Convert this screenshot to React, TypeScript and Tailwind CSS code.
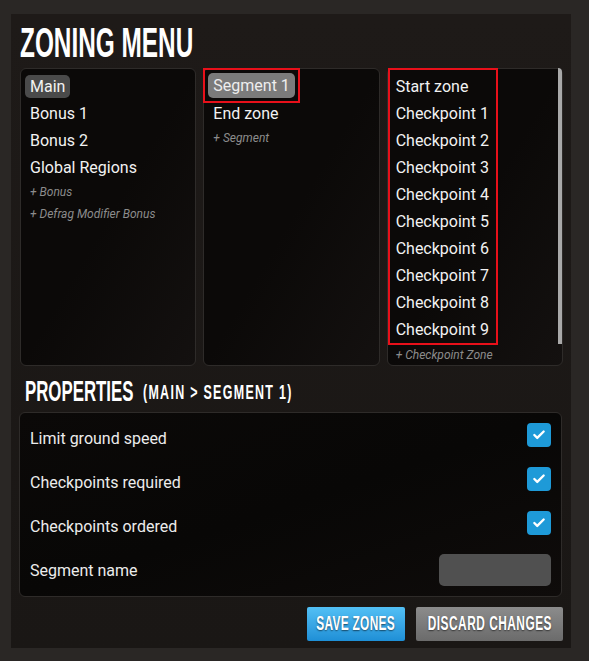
import React from "react";
import { Check } from "lucide-react";

const HEAD = { fontFamily: '"Liberation Sans", Arial, sans-serif' };
const BODY = { fontFamily: 'Roboto, "Liberation Sans", sans-serif' };

function Row({ children, selected }: { children: React.ReactNode; selected?: boolean }) {
  return (
    <div className="h-[27px] flex items-center">
      <span
        className={
          "px-[5px] h-[23px] flex items-center rounded-[5px] text-[16px] text-[#f2f2f2] " +
          (selected ? "bg-[#4a4a4a]" : "")
        }
      >
        {children}
      </span>
    </div>
  );
}

function Add({ children, h = "h-[22px]", pl = "pl-[5px]" }: { children: React.ReactNode; h?: string; pl?: string }) {
  return <div className={`${h} ${pl} flex items-center text-[12px] italic text-[#8c8c8c]`}>{children}</div>;
}

function Box({ children, extra = "" }: { children: React.ReactNode; extra?: string }) {
  return (
    <div
      className={
        "relative h-[298px] rounded-[6px] border border-[#2e2b29] bg-gradient-to-br from-[#0b0908] via-[#0b0908] to-[#141110] " +
        extra
      }
    >
      {children}
    </div>
  );
}

function Prop({ label, checked }: { label: string; checked?: boolean }) {
  return (
    <div className="h-[44px] flex items-center justify-between pl-[10px] pr-[10px]">
      <span className="text-[16px] text-[#ececec]">{label}</span>
      {checked ? (
        <span className="w-[24px] h-[24px] mb-[8px] rounded-[4px] bg-[#1e9ad8] flex items-center justify-center">
          <Check size={14} strokeWidth={4} color="#ffffff" />
        </span>
      ) : (
        <span className="w-[112px] h-[32px] mb-[2px] rounded-[5px] bg-[#505050]" />
      )}
    </div>
  );
}

export default function App() {
  return (
    <div
      className="w-[589px] h-[661px] bg-[#2a2725] pt-[14px] pl-[11px] overflow-hidden"
      style={BODY}
    >
      <div className="w-[560px] h-[634px] bg-gradient-to-b from-[#1e1a18] to-[#1a1715] flex flex-col">
        {/* title */}
        <div className="h-[54px] pl-[9px] flex items-center pt-[4px]" style={HEAD}>
          <span className="inline-block origin-left scale-x-[0.58] text-[42px] leading-none font-bold text-white whitespace-nowrap">
            ZONING MENU
          </span>
        </div>

        {/* columns */}
        <div className="grid grid-cols-3 gap-[7px] pl-[9px] pr-[8px]">
          <Box extra="p-[4px]">
            <Row selected>Main</Row>
            <Row>Bonus 1</Row>
            <Row>Bonus 2</Row>
            <Row>Global Regions</Row>
            <Add>+ Bonus</Add>
            <Add>+ Defrag Modifier Bonus</Add>
          </Box>
          <Box>
            <div className="-ml-px -mt-px w-fit border-2 border-[#e8101a] p-[3px]">
              <span className="px-[5px] h-[25px] flex items-center rounded-[5px] bg-[#7b7b7b] text-[16px] text-[#eeeeee]">
                Segment 1
              </span>
            </div>
            <div className="h-[22px] pl-[9px] flex items-center text-[16px] text-[#f2f2f2]">End zone</div>
            <Add h="h-[26px]" pl="pl-[9px]">+ Segment</Add>
          </Box>
          <Box>
            <div className="-mt-px w-[110px] border-2 border-[#e8101a] pt-[3px]">
              {[
                "Start zone",
                "Checkpoint 1",
                "Checkpoint 2",
                "Checkpoint 3",
                "Checkpoint 4",
                "Checkpoint 5",
                "Checkpoint 6",
                "Checkpoint 7",
                "Checkpoint 8",
                "Checkpoint 9",
              ].map((t) => (
                <div key={t} className="h-[27px] pl-[6px] flex items-center text-[16px] text-[#f2f2f2] whitespace-nowrap">
                  {t}
                </div>
              ))}
            </div>
            <Add h="h-[20px]" pl="pl-[8px]">+ Checkpoint Zone</Add>
            <div className="absolute -top-px right-0 w-[4px] h-[276px] bg-[#a9a9a9] rounded-tr-[6px]" />
          </Box>
        </div>

        {/* properties heading */}
        <div className="h-[46px] pl-[14px] flex items-center pt-[6px] text-white font-bold" style={HEAD}>
          <span className="inline-block w-[118px] whitespace-nowrap">
            <span className="inline-block origin-left scale-x-[0.58] text-[29px] leading-none">PROPERTIES</span>
          </span>
          <span className="inline-block whitespace-nowrap pt-[3px]">
            <span className="inline-block origin-left scale-x-[0.64] text-[19.5px] leading-none tracking-[2px]">
              (MAIN &gt; SEGMENT 1)
            </span>
          </span>
        </div>

        {/* properties box */}
        <div className="ml-[8px] w-[543px] h-[185px] rounded-[6px] border border-[#2e2b29] bg-gradient-to-br from-[#0b0908] via-[#080706] to-[#0f0c0b] pt-[4px]">
          <Prop label="Limit ground speed" checked />
          <Prop label="Checkpoints required" checked />
          <Prop label="Checkpoints ordered" checked />
          <Prop label="Segment name" />
        </div>

        {/* buttons */}
        <div className="flex justify-end gap-[11px] pr-[8px] mt-[10px]" style={HEAD}>
          <div className="w-[98px] h-[34px] rounded-[2px] bg-gradient-to-b from-[#52c0f5] to-[#1e8fd6] flex items-center justify-center overflow-visible">
            <span className="inline-block scale-x-[0.61] text-[19.5px] leading-none font-bold text-white whitespace-nowrap tracking-[0.5px] [text-shadow:0_1px_2px_rgba(0,0,0,0.55)]">
              SAVE ZONES
            </span>
          </div>
          <div className="w-[147px] h-[34px] rounded-[2px] bg-gradient-to-b from-[#8c8c8c] to-[#6b6b6b] flex items-center justify-center overflow-visible">
            <span className="inline-block scale-x-[0.61] text-[19.5px] leading-none font-bold text-white whitespace-nowrap tracking-[0.8px] [text-shadow:0_1px_2px_rgba(0,0,0,0.55)]">
              DISCARD CHANGES
            </span>
          </div>
        </div>
      </div>
    </div>
  );
}
